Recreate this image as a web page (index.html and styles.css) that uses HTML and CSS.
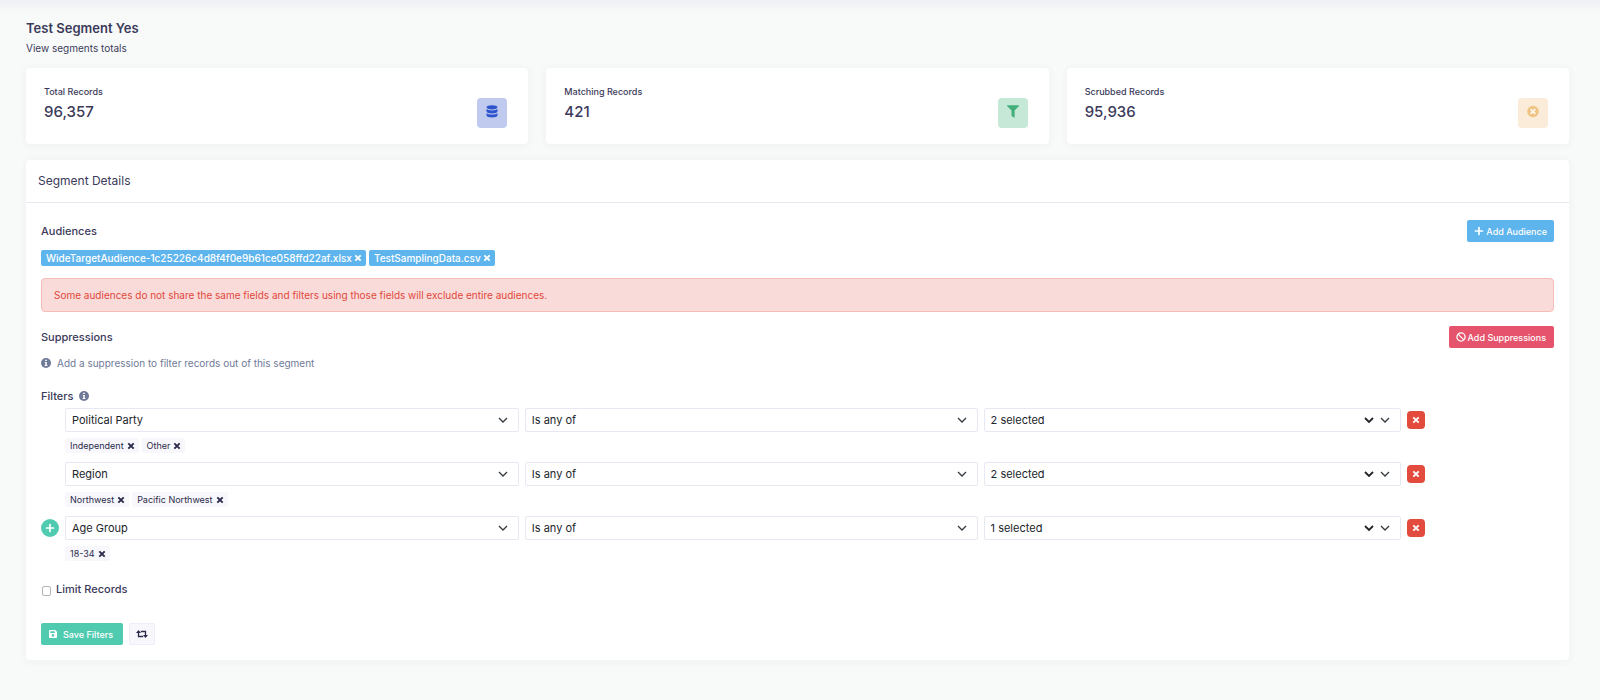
FILE: index.html
```html
<!DOCTYPE html>
<html lang="en">
<head>
    <meta charset="UTF-8">
    <meta name="viewport" content="width=device-width, initial-scale=1.0">
    <title>Test Segment Yes</title>
    <link rel="stylesheet" href="styles.css">
</head>
<body>
    <!-- shared icons -->
    <svg class="sprite" aria-hidden="true">
        <symbol id="times" viewBox="0 0 10 10"><path d="M2.3 2.3l5.4 5.4M7.7 2.3l-5.4 5.4" fill="none" stroke="currentColor" stroke-width="1.9"/></symbol>
        <symbol id="plus" viewBox="0 0 10 10"><path d="M5 1.5v7M1.5 5h7" fill="none" stroke="currentColor" stroke-width="1.7" stroke-linecap="round"/></symbol>
        <symbol id="info" viewBox="0 0 10 10"><circle cx="5" cy="5" r="5" fill="currentColor"/><path d="M4.1 1.7h1.7v1.4H4.1zM3.8 4h2v2.9h.6v1H3.6v-1h.7V5h-.5z" fill="#fff"/></symbol>
    </svg>

    <main class="page">
        <header class="page-header">
            <h1>Test Segment Yes</h1>
            <p>View segments totals</p>
        </header>

        <section class="stats">
            <div class="card stat">
                <div>
                    <h2>Total Records</h2>
                    <p class="stat-value">96,357</p>
                </div>
                <span class="stat-icon blue">
                    <svg width="12" height="13" viewBox="0 0 12 13"><g fill="currentColor"><ellipse cx="6" cy="2.3" rx="5.5" ry="2.1"/><path d="M.5 4.1c2 1.7 9 1.7 11 0v2.4c0 2.5-11 2.5-11 0zM.5 8.2c2 1.7 9 1.7 11 0v2.4c0 2.6-11 2.6-11 0z"/></g></svg>
                </span>
            </div>
            <div class="card stat">
                <div>
                    <h2>Matching Records</h2>
                    <p class="stat-value">421</p>
                </div>
                <span class="stat-icon green">
                    <svg width="12" height="13" viewBox="0 0 12 13"><path d="M.5.2h11c.5 0 .7.6.4.9L7.6 5.6v6.6c0 .5-.4.6-.8.4L4.8 11c-.2-.2-.3-.4-.3-.6V5.6L.1 1.1C-.2.8 0 .2.5.2z" fill="currentColor"/></svg>
                </span>
            </div>
            <div class="card stat">
                <div>
                    <h2>Scrubbed Records</h2>
                    <p class="stat-value">95,936</p>
                </div>
                <span class="stat-icon orange">
                    <svg width="12" height="13" viewBox="0 0 12 13"><circle cx="6" cy="6.5" r="5.8" fill="currentColor"/><path d="M3.6 4.1l4.8 4.8M8.4 4.1l-4.8 4.8" stroke="#fdf5ea" stroke-width="1.8"/></svg>
                </span>
            </div>
        </section>

        <section class="card details">
            <h2 class="details-title">Segment Details</h2>
            <div class="details-body">
                <div class="section-head">
                    <h3>Audiences</h3>
                    <button type="button" class="btn btn-info"><svg class="icon"><use href="#plus"/></svg> Add Audience</button>
                </div>
                <div class="audiences">
                    <button type="button" class="badge">WideTargetAudience-1c25226c4d8f4f0e9b61ce058ffd22af.xlsx<svg class="icon"><use href="#times"/></svg></button>
                    <button type="button" class="badge">TestSamplingData.csv<svg class="icon"><use href="#times"/></svg></button>
                </div>
                <p class="alert" role="alert">Some audiences do not share the same fields and filters using those fields will exclude entire audiences.</p>

                <div class="section-head">
                    <h3>Suppressions</h3>
                    <button type="button" class="btn btn-danger"><svg class="icon" viewBox="0 0 10 10"><circle cx="5" cy="5" r="4.1" fill="none" stroke="currentColor" stroke-width="1.3"/><path d="M2.1 2.1l5.8 5.8" stroke="currentColor" stroke-width="1.3"/></svg> Add Suppressions</button>
                </div>
                <p class="hint"><svg class="icon"><use href="#info"/></svg>Add a suppression to filter records out of this segment</p>

                <h3 class="filters-title">Filters <svg class="icon"><use href="#info"/></svg></h3>
                <div class="filter">
                    <select class="field" aria-label="Field"><option>Political Party</option></select>
                    <select class="operator" aria-label="Operator"><option>Is any of</option></select>
                    <select class="values" aria-label="Values"><option>2 selected</option></select>
                    <button type="button" class="remove" aria-label="Remove filter"><svg class="icon"><use href="#times"/></svg></button>
                    <div class="tags">
                        <button type="button" class="tag">Independent<svg class="icon"><use href="#times"/></svg></button>
                        <button type="button" class="tag">Other<svg class="icon"><use href="#times"/></svg></button>
                    </div>
                </div>
                <div class="filter">
                    <select class="field" aria-label="Field"><option>Region</option></select>
                    <select class="operator" aria-label="Operator"><option>Is any of</option></select>
                    <select class="values" aria-label="Values"><option>2 selected</option></select>
                    <button type="button" class="remove" aria-label="Remove filter"><svg class="icon"><use href="#times"/></svg></button>
                    <div class="tags">
                        <button type="button" class="tag">Northwest<svg class="icon"><use href="#times"/></svg></button>
                        <button type="button" class="tag">Pacific Northwest<svg class="icon"><use href="#times"/></svg></button>
                    </div>
                </div>
                <div class="filter">
                    <button type="button" class="add" aria-label="Add filter"><svg class="icon"><use href="#plus"/></svg></button>
                    <select class="field" aria-label="Field"><option>Age Group</option></select>
                    <select class="operator" aria-label="Operator"><option>Is any of</option></select>
                    <select class="values" aria-label="Values"><option>1 selected</option></select>
                    <button type="button" class="remove" aria-label="Remove filter"><svg class="icon"><use href="#times"/></svg></button>
                    <div class="tags">
                        <button type="button" class="tag">18-34<svg class="icon"><use href="#times"/></svg></button>
                    </div>
                </div>

                <div class="limit">
                    <input type="checkbox" id="limitRecords">
                    <label for="limitRecords">Limit Records</label>
                </div>

                <div class="actions">
                    <button type="button" class="btn btn-success"><svg class="icon" viewBox="0 0 10 10"><path fill="currentColor" fill-rule="evenodd" d="M1.8 1h5.4L9 2.8v5.4c0 .5-.3.8-.8.8H1.8C1.3 9 1 8.7 1 8.2V1.8c0-.5.3-.8.8-.8zm.5 1.2v1.9h4.5V2.2zM5 5.1a1.3 1.3 0 1 0 0 2.6 1.3 1.3 0 0 0 0-2.6z"/></svg>Save Filters</button>
                    <button type="button" class="btn btn-light" aria-label="Reset filters"><svg width="12" height="8" viewBox="0 0 12 8"><path d="M2.5 2.5v4h4.7M4.8 1.5h4.7v4" fill="none" stroke="currentColor" stroke-width="1.3"/><path d="M0 3L2.5 0 5 3zM7 5l2.5 3L12 5z" fill="currentColor"/></svg></button>
                </div>
            </div>
        </section>
    </main>
</body>
</html>
```
FILE: styles.css
```css
* {
    box-sizing: border-box;
}
body {
    margin: 0;
    min-height: 100vh;
    font-family: Inter, "Liberation Sans", sans-serif;
    font-size: 10px;
    color: #3b3a5a;
    background: linear-gradient(#eef0f6, #f8faf9 14px) #f8faf9;
}
h1, h2, h3, p {
    margin: 0;
}
button, select {
    font-family: inherit;
    cursor: pointer;
}
button {
    display: inline-flex;
    align-items: center;
    justify-content: center;
    border: 0;
}
.sprite {
    display: none;
}
.icon {
    width: 10px;
    height: 10px;
    flex: none;
}
.page {
    padding: 18px 31px 40px 26px;
}
.page-header {
    margin-bottom: 10px;
}
.page-header h1 {
    font-size: 13px;
    line-height: 20px;
    font-weight: 600;
}
.page-header p {
    line-height: 20px;
}
.card {
    background: #fff;
    border-radius: 4px;
    box-shadow: 0 1px 8px rgba(70, 70, 140, 0.06);
}

/* totals */
.stats {
    display: grid;
    grid-template-columns: repeat(3, 1fr);
    gap: 18px;
    margin-bottom: 16px;
}
.stat {
    display: flex;
    justify-content: space-between;
    padding: 16px 21px 16px 18px;
}
.stat h2 {
    font-size: 9px;
    line-height: 16px;
    font-weight: 500;
}
.stat-value {
    font-size: 15px;
    line-height: 24px;
    font-weight: 500;
}
.stat-icon {
    display: flex;
    align-items: center;
    justify-content: center;
    width: 30px;
    height: 30px;
    margin-top: 14px;
    padding-bottom: 3px;
    border-radius: 4px;
}
.blue {
    color: #2c54cc;
    background: #bfcaee;
}
.green {
    color: #42ae7a;
    background: #c6e8d7;
}
.orange {
    color: #eec383;
    background: #faecd8;
}

/* segment details */
.details-title {
    padding: 11px 12px;
    border-bottom: 1px solid #e8e8f2;
    font-size: 12px;
    line-height: 20px;
    font-weight: 400;
}
.details-body {
    padding: 17px 15px 15px;
}
.section-head {
    display: flex;
    align-items: center;
    justify-content: space-between;
}
h3 {
    font-size: 11px;
    line-height: 16px;
    font-weight: 500;
}
.btn {
    gap: 2px;
    height: 22px;
    padding: 0 7px;
    border-radius: 2px;
    color: #fff;
    font-size: 9px;
    font-weight: 500;
}
.btn-info, .badge {
    background: #5eb4ec;
}
.btn-danger {
    padding: 0 8px 0 7px;
    background: #e6536c;
}
.btn-success {
    padding: 0 10px 0 7px;
    gap: 5px;
    background: #51cbb0;
}
.btn-light {
    border: 1px solid #efedfa;
    background: #f8f8fc;
    color: #2b2a4a;
    padding: 0 6px;
}
.audiences {
    display: flex;
    gap: 3px;
    margin: 8px 0 12px;
}
.badge {
    gap: 1px;
    height: 16px;
    padding: 0 3px 0 5px;
    border-radius: 2px;
    color: #fff;
    font-size: 10px;
    font-weight: 500;
}
.alert {
    margin-bottom: 14px;
    padding: 8px 12px;
    border: 1px solid #f4bdb9;
    border-radius: 4px;
    background: #f9dbd9;
    color: #e0483d;
    line-height: 16px;
}
.hint {
    display: flex;
    align-items: center;
    gap: 6px;
    margin: 7px 0 17px;
    line-height: 16px;
    color: #6f7a98;
}
.filters-title {
    display: flex;
    align-items: center;
    gap: 6px;
    margin-bottom: 4px;
}
.filters-title .icon {
    color: #6f7a98;
}

/* filter rows */
.filter {
    display: grid;
    grid-template-columns: 18px 454fr 453fr 418fr 18px;
    column-gap: 6px;
    row-gap: 6px;
    align-items: center;
    margin: 0 8.5% 9px 0;
}
.field {
    grid-column: 2;
}
.filter select {
    appearance: none;
    height: 24px;
    padding: 0 30px 0 6px;
    border: 1px solid #e8e8f2;
    border-radius: 2px;
    background: #fff url("data:image/svg+xml,%3Csvg xmlns='http://www.w3.org/2000/svg' viewBox='0 0 10 6'%3E%3Cpath d='M1 1l4 4 4-4' fill='none' stroke='%23343a40' stroke-width='1.3'/%3E%3C/svg%3E") no-repeat right 10px center / 10px 6px;
    color: #212529;
    font-size: 11px;
}
.filter .values {
    background-image: url("data:image/svg+xml,%3Csvg xmlns='http://www.w3.org/2000/svg' viewBox='0 0 26 6'%3E%3Cpath d='M1 1l4 4 4-4' fill='none' stroke='%23212529' stroke-width='1.8'/%3E%3Cpath d='M17 1l4 4 4-4' fill='none' stroke='%23343a40' stroke-width='1.3'/%3E%3C/svg%3E");
    background-size: 26px 6px;
}
.remove {
    width: 18px;
    height: 18px;
    padding: 0;
    border-radius: 4px;
    background: #e24b3e;
    color: #fff;
}
.add {
    width: 18px;
    height: 18px;
    padding: 0;
    border-radius: 50%;
    background: #51cbb0;
    color: #fff;
}
.tags {
    display: flex;
    grid-column: 2 / -1;
    gap: 3px;
}
.tag {
    gap: 2px;
    height: 15px;
    padding: 0 3px 0 5px;
    border-radius: 2px;
    background: #f8f8fc;
    color: #2b2a4a;
    font-size: 9px;
}
.limit {
    display: flex;
    align-items: center;
    gap: 5px;
    margin: 20px 0 26px;
    font-size: 11px;
    line-height: 16px;
    font-weight: 500;
}
.limit input {
    appearance: none;
    width: 9px;
    height: 10px;
    margin: 3px 0 0 1px;
    border: 1px solid #b5b5b8;
    border-radius: 2px;
    background: #fff;
}
.limit input:checked {
    background: #51cbb0;
}
.actions {
    display: flex;
    gap: 6px;
}
```
